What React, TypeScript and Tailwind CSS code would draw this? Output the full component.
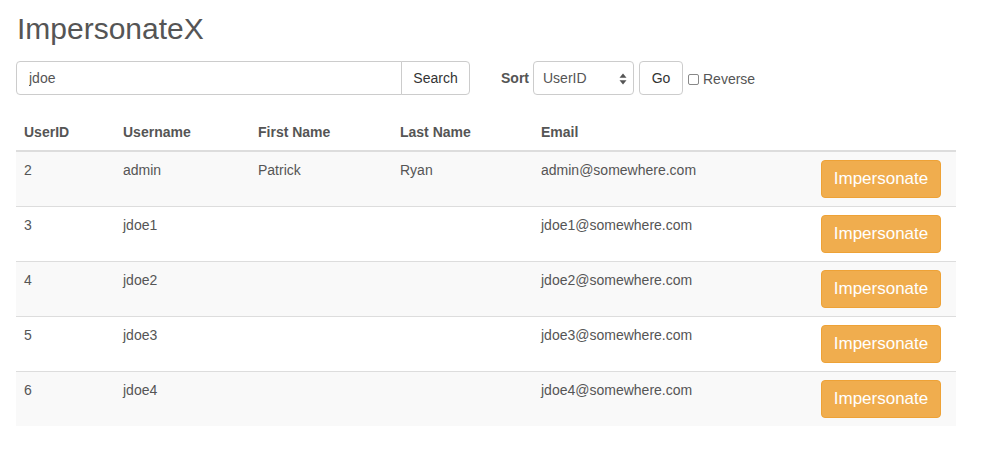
import React from "react";

const rows = [
  { id: 2, username: "admin", first: "Patrick", last: "Ryan", email: "admin@somewhere.com" },
  { id: 3, username: "jdoe1", first: "", last: "", email: "jdoe1@somewhere.com" },
  { id: 4, username: "jdoe2", first: "", last: "", email: "jdoe2@somewhere.com" },
  { id: 5, username: "jdoe3", first: "", last: "", email: "jdoe3@somewhere.com" },
  { id: 6, username: "jdoe4", first: "", last: "", email: "jdoe4@somewhere.com" },
];

export default function App() {
  return (
    <div
      className="min-h-[456px] bg-white px-4 text-[14px] text-[#555]"
      style={{ fontFamily: '"Liberation Sans", Arial, sans-serif' }}
    >
      <h1 className="pt-[12px] text-[30px] leading-[33px] font-normal text-[#555] pl-[1px]">ImpersonateX</h1>
      <div className="mt-[16px] flex items-center h-[34px]">
        <div className="flex h-[34px] w-[454px]">
          <input
            defaultValue="jdoe"
            className="h-[34px] flex-1 rounded-l-[4px] border border-[#ccc] px-3 text-[14px] text-[#555] outline-none"
            style={{ fontFamily: '"Liberation Sans", Arial, sans-serif' }}
          />
          <button className="h-[34px] w-[69px] -ml-px rounded-r-[4px] border border-[#ccc] bg-white text-[14px] text-[#333]">
            Search
          </button>
        </div>
        <span className="ml-[31px] font-bold text-[#555]">Sort</span>
        <div className="ml-[4px] relative flex h-[34px] w-[101px] items-center rounded-[4px] border border-[#ccc] bg-white pl-[9px] text-[14px] text-[#555]">
          UserID
          <svg className="absolute right-[6px] top-[11px]" width="8" height="12" viewBox="0 0 8 12">
            <path d="M4 0.5 L7.5 4.8 L0.5 4.8 Z" fill="#555" />
            <path d="M4 11.5 L7.5 7.2 L0.5 7.2 Z" fill="#555" />
          </svg>
        </div>
        <button className="ml-[5px] h-[34px] w-[44px] rounded-[4px] border border-[#ccc] bg-white text-[14px] text-[#333]">
          Go
        </button>
        <span className="ml-[5px] inline-block h-[11px] w-[11px] rounded-[2px] border border-[#888] bg-white translate-y-[1px]" />
        <span className="ml-[4px] text-[14px] text-[#555] translate-y-[1px]">Reverse</span>
      </div>
      <table className="mt-[19px] w-[940px] table-fixed border-collapse">
        <colgroup>
          <col className="w-[99px]" />
          <col className="w-[135px]" />
          <col className="w-[142px]" />
          <col className="w-[141px]" />
          <col />
          <col className="w-[156px]" />
        </colgroup>
        <thead>
          <tr className="border-b-2 border-[#ddd]">
            {["UserID", "Username", "First Name", "Last Name", "Email", ""].map((h, i) => (
              <th key={i} className="p-2 text-left align-bottom font-bold leading-[20px] text-[#555]">
                {h}
              </th>
            ))}
          </tr>
        </thead>
        <tbody>
          {rows.map((r, i) => (
            <tr key={r.id} className={`${i > 0 ? "border-t border-[#ddd]" : ""} ${i % 2 === 0 ? "bg-[#f9f9f9]" : "bg-white"}`}>
              <td className="p-2 align-top leading-[20px]">{r.id}</td>
              <td className="p-2 align-top leading-[20px]">{r.username}</td>
              <td className="p-2 align-top leading-[20px]">{r.first}</td>
              <td className="p-2 align-top leading-[20px]">{r.last}</td>
              <td className="p-2 align-top leading-[20px]">{r.email}</td>
              <td className="py-2 pr-[15px] text-right align-top">
                <button className="h-[38px] w-[120px] rounded-[4px] border border-[#eea236] bg-[#f0ad4e] text-[17px] text-white">
                  Impersonate
                </button>
              </td>
            </tr>
          ))}
        </tbody>
      </table>
    </div>
  );
}
